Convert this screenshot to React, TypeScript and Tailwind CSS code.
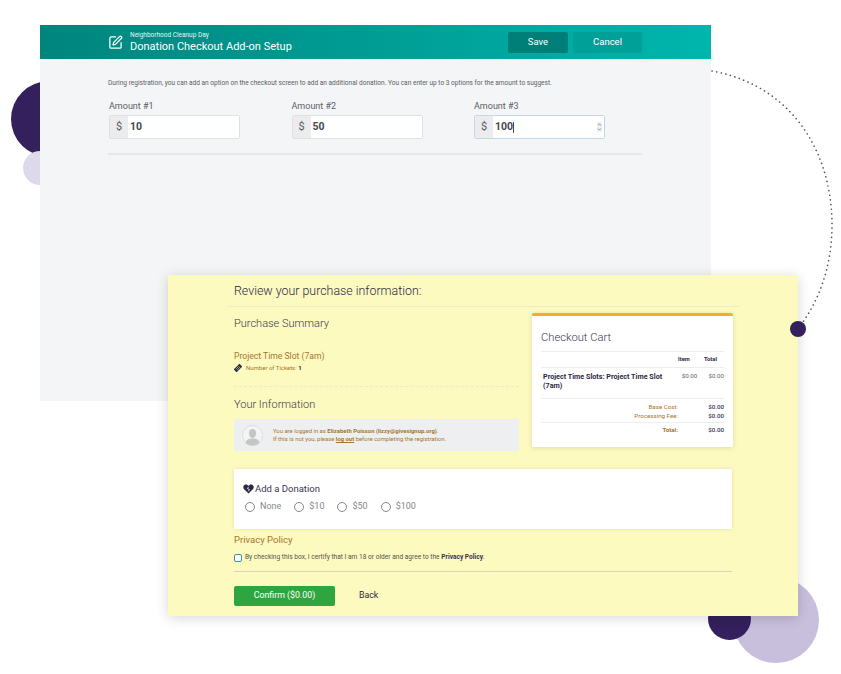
import { SquarePen, ChevronUp, ChevronDown } from "lucide-react";

const FONT = "font-['Roboto','Liberation_Sans',sans-serif]";

function AmountField({ label, value, focused }: { label: string; value: string; focused?: boolean }) {
  return (
    <div className="w-[131px]">
      <div className="text-[9px] leading-[11px] text-[#5a5f66] mb-[3px]">{label}</div>
      <div className={`flex h-[24px] rounded-[2px] border ${focused ? "border-[#c6d6ea]" : "border-[#dfe0e3]"}`}>
        <div className="w-[18px] flex items-center justify-center bg-[#ececee] text-[11px] text-[#555a62]">$</div>
        <div className="flex-1 flex items-center bg-white pl-[2px] pr-[2px] text-[10.5px] font-bold text-[#44484f]">
          <span>{value}</span>
          {focused && <span className="w-px h-[11px] bg-[#44484f]" />}
          {focused && (
            <span className="ml-auto flex flex-col items-center bg-[#f0f0f0] text-[#777]">
              <ChevronUp size={5} strokeWidth={4} />
              <ChevronDown size={5} strokeWidth={4} />
            </span>
          )}
        </div>
      </div>
    </div>
  );
}

function Radio({ label }: { label: string }) {
  return (
    <div className="flex items-center gap-[5px] text-[9px] text-[#85888d]">
      <span className="w-[10px] h-[10px] rounded-full border border-[#84878c] bg-white" />
      {label}
    </div>
  );
}

function BackPanel() {
  return (
    <div className="absolute left-[40px] top-[25px] w-[671px] h-[376px] bg-[#f4f5f7]">
      <div className="h-[34px] flex items-center pl-[68px] bg-gradient-to-r from-[#00857d] to-[#00b6ad] text-white">
        <SquarePen size={15} strokeWidth={2} className="mr-[7px]" />
        <div className="w-[378px]">
          <div className="text-[6.5px] leading-[8px] opacity-90">Neighborhood Cleanup Day</div>
          <div className="text-[11px] leading-[15px]">Donation Checkout Add-on Setup</div>
        </div>
        <div className="w-[60px] h-[21px] rounded-[2px] bg-[#007f79] flex items-center justify-center text-[9.5px]">Save</div>
        <div className="w-[69px] h-[21px] ml-[5px] rounded-[2px] bg-[#00a098] flex items-center justify-center text-[9.5px]">Cancel</div>
      </div>
      <div className="pl-[68px] pr-[69px] pt-[20px]">
        <p className="text-[6.55px] leading-[9px] text-[#5a5f66]">
          During registration, you can add an option on the checkout screen to add an additional donation. You can enter up to 3 options for the amount to suggest.
        </p>
        <div className="flex gap-[51.5px] mt-[13px] pl-px">
          <AmountField label="Amount #1" value="10" />
          <AmountField label="Amount #2" value="50" />
          <AmountField label="Amount #3" value="100" focused />
        </div>
        <div className="h-[2px] bg-[#e6e7ea] mt-[14px]" />
      </div>
    </div>
  );
}

function CartTotal({ label, value, bold }: { label: string; value: string; bold?: boolean }) {
  return (
    <div className={`flex justify-between text-[6.2px] leading-[9px] ${bold ? "font-bold" : ""}`}>
      <span className="w-[137px] text-right text-[#a5752f]">{label}</span>
      <span className="text-[#3a3650] font-medium">{value}</span>
    </div>
  );
}

function CheckoutCart() {
  return (
    <div className="w-[201px] h-[134px] bg-white rounded-t-[2px] border-t-[3px] border-[#f4ab33] shadow-[0_1px_5px_rgba(0,0,0,0.12)] px-[9px]">
      <div className="text-[11.2px] font-light text-[#3a3650] leading-[14px] mt-[15px]">Checkout Cart</div>
      <div className="h-px bg-[#eeeeee] mt-[6px]" />
      <div className="flex justify-end text-[5.8px] font-bold text-[#2c2845] h-[15px] items-center">
        <span className="w-[26px]">Item</span>
        <span className="w-[20px]">Total</span>
      </div>
      <div className="h-px bg-[#eeeeee]" />
      <div className="flex pt-[4px] h-[26px] text-[#2c2845]">
        <div className="w-[142px] pl-[2px] text-[7.2px] leading-[9px] font-bold">Project Time Slots: Project Time Slot (7am)</div>
        <div className="w-[27px] text-[6.2px] leading-[9px] text-[#666]">$0.00</div>
        <div className="text-[6.2px] leading-[9px] text-[#666]">$0.00</div>
      </div>
      <div className="h-px bg-[#eeeeee] mt-[4px]" />
      <div className="mt-[4px]">
        <CartTotal label="Base Cost:" value="$0.00" />
        <CartTotal label="Processing Fee:" value="$0.00" />
      </div>
      <div className="h-px bg-[#eeeeee] mt-[1px]" />
      <div className="mt-[3px]">
        <CartTotal label="Total:" value="$0.00" bold />
      </div>
    </div>
  );
}

function FrontPanel() {
  return (
    <div className="absolute left-[168px] top-[275px] w-[630px] h-[341px] bg-[#fdfabf] shadow-[0_2px_12px_rgba(0,0,0,0.16)]">
      <div className="pl-[66px] h-[31px] pt-[2px] flex items-center text-[12.4px] font-light text-[#2c2845]">Review your purchase information:</div>
      <div className="h-px bg-[#efecc0] ml-[59px] mr-[58px]" />
      <div className="flex pl-[66px] pr-[64px]">
        <div className="w-[285px] shrink-0">
          <div className="text-[11px] font-light leading-[13px] text-[#3a3650] mt-[10px]">Purchase Summary</div>
          <div className="text-[8.6px] leading-[11px] text-[#a5752f] mt-[21px]">Project Time Slot (7am)</div>
          <div className="flex items-center gap-[4px] mt-[2px] text-[6px] leading-[8px] text-[#a5752f]">
            <svg width="8" height="8" viewBox="0 0 8 8" className="shrink-0">
              <g transform="rotate(-45 4 4)">
                <rect x="0" y="2" width="8" height="4" rx="0.5" fill="#2c2845" />
                <path d="M2.5 2V6M4 2V6M5.5 2V6" stroke="#fdfabf" strokeWidth="0.5" />
              </g>
            </svg>
            <span>Number of Tickets: <b className="text-[#2c2845]">1</b></span>
          </div>
          <div className="border-t border-dashed border-[#ecebc8] mt-[14px]" />
          <div className="text-[11px] font-light leading-[13px] text-[#3a3650] mt-[11px]">Your Information</div>
          <div className="flex items-center h-[32px] mt-[8px] pl-[8px] bg-[#eeeff0]">
            <svg width="21" height="21" viewBox="0 0 21 21" className="mr-[10px]">
              <circle cx="10.5" cy="10.5" r="10" fill="#f4f4f4" stroke="#d6d6d6" strokeWidth="0.7" />
              <ellipse cx="10.5" cy="8.5" rx="3.6" ry="4.6" fill="#c4c5c6" />
              <path d="M3.5 18 C4.5 14 7.5 13.5 10.5 13.5 C13.5 13.5 16.5 14 17.5 18 C15.5 20 13 20.5 10.5 20.5 C8 20.5 5.5 20 3.5 18Z" fill="#c4c5c6" />
            </svg>
            <div className="text-[5.9px] leading-[8.5px] text-[#a5752f]">
              <div>You are logged in as <b>Elizabeth Poisson (lizzy@givesignup.org)</b>.</div>
              <div>If this is not you, please <b className="underline">log out</b> before completing the registration.</div>
            </div>
          </div>
        </div>
        <div className="ml-[13px] mt-[6px]">
          <CheckoutCart />
        </div>
      </div>
      <div className="ml-[66px] mr-[66px] mt-[18px]">
        <div className="h-[60px] bg-white shadow-[0_0_4px_rgba(0,0,0,0.1)] pl-[9px] pt-[14px]">
          <div className="flex items-center gap-[1px] text-[9.5px] leading-[12px] text-[#3a3650]">
            <svg width="11" height="10" viewBox="0 0 12 11" className="shrink-0">
              <path d="M6 10.5 L1 5.5 C-0.5 3.8 0.3 0.8 3 0.6 C4.3 0.5 5.4 1.2 6 2.2 C6.6 1.2 7.7 0.5 9 0.6 C11.7 0.8 12.5 3.8 11 5.5Z" fill="#2c2845" />
              <path d="M6 3.2 L4.8 5 L7 6 L5.8 8" fill="none" stroke="#ffffff" strokeWidth="0.9" />
            </svg>
            Add a Donation
          </div>
          <div className="flex gap-[13px] mt-[5px] pl-[2px]">
            <Radio label="None" />
            <Radio label="$10" />
            <Radio label="$50" />
            <Radio label="$100" />
          </div>
        </div>
        <div className="text-[9.5px] leading-[12px] text-[#a5752f] mt-[5px]">Privacy Policy</div>
        <div className="flex items-center gap-[3px] mt-[7px] text-[6.6px] leading-[9px] text-[#55524f]">
          <span className="w-[8px] h-[8px] rounded-[2px] border border-[#3f93a8] bg-white" />
          <span>By checking this box, I certify that I am 18 or older and agree to the <b className="text-[#3a3650]">Privacy Policy</b>.</span>
        </div>
        <div className="h-px bg-[#d8d5b6] mt-[9px]" />
        <div className="flex items-center mt-[14px]">
          <div className="w-[101px] h-[20px] rounded-[2px] bg-[#2fa53f] text-white text-[8.8px] flex items-center justify-center">Confirm ($0.00)</div>
          <div className="ml-[24px] text-[8.8px] text-[#2c2845]">Back</div>
        </div>
      </div>
    </div>
  );
}

export default function App() {
  return (
    <div className={`relative w-[841px] h-[674px] overflow-hidden bg-white ${FONT}`}>
      <div className="absolute left-[11px] top-[81px] w-[76px] h-[76px] rounded-full bg-[#33205c]" />
      <div className="absolute left-[23px] top-[151px] w-[34px] h-[34px] rounded-full bg-[#ddd9ea]" />
      <div className="absolute left-[733px] top-[577px] w-[86px] h-[86px] rounded-full bg-[#c7bfdc]" />
      <div className="absolute left-[708px] top-[597px] w-[43px] h-[43px] rounded-full bg-[#33205c]" />
      <svg className="absolute left-0 top-0" width="841" height="674" fill="none">
        <path d="M712 71 C790 85 832 150 832 225 C832 265 820 300 798 329" stroke="#55525e" strokeWidth="1.6" strokeLinecap="round" strokeDasharray="0.1 4.6" />
      </svg>
      <BackPanel />
      <FrontPanel />
      <div className="absolute left-[790px] top-[321px] w-[16px] h-[16px] rounded-full bg-[#33205c]" />
    </div>
  );
}
